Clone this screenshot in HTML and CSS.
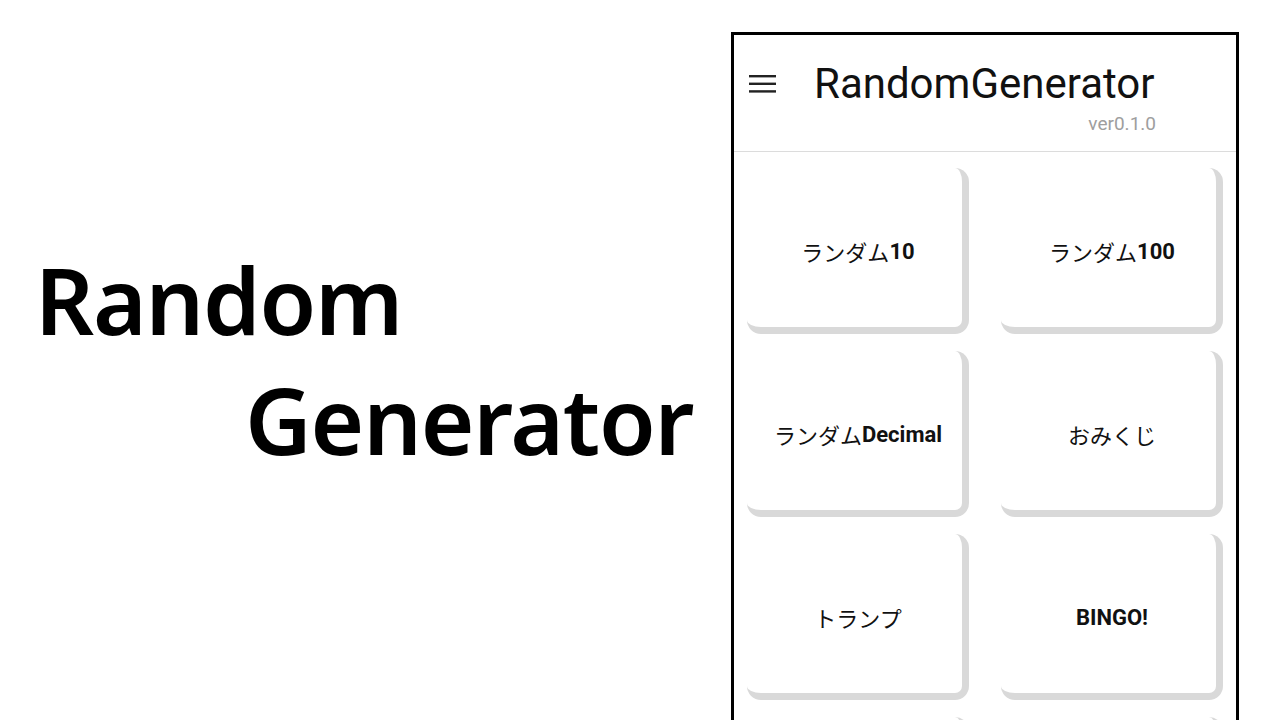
FILE: index.html
```html
<!DOCTYPE html>
<html lang="ja">
<head>
  <meta charset="UTF-8">
  <title>RandomGenerator</title>
  <link rel="stylesheet" href="styles.css">
</head>
<body>
  <div class="hero">
    <div class="hero-line">Random</div>
    <div class="hero-line indent">Generator</div>
  </div>

  <div class="phone">
    <div class="app-header">
      <div class="app-bar">
        <svg class="menu-icon" width="28" height="18" viewBox="0 0 28 18">
          <rect x="0" y="0" width="27" height="2.4" fill="#222"/>
          <rect x="0" y="7.6" width="27" height="2.4" fill="#222"/>
          <rect x="0" y="15.2" width="27" height="2.4" fill="#222"/>
        </svg>
        <div class="app-title">RandomGenerator</div>
      </div>
      <div class="app-version">ver0.1.0</div>
    </div>

    <div class="menu-grid">
      <div class="menu-card"><span class="ja">ランダム</span>10</div>
      <div class="menu-card"><span class="ja">ランダム</span>100</div>
      <div class="menu-card"><span class="ja">ランダム</span>Decimal</div>
      <div class="menu-card"><span class="ja">おみくじ</span></div>
      <div class="menu-card"><span class="ja">トランプ</span></div>
      <div class="menu-card">BINGO!</div>
      <div class="menu-card"></div>
      <div class="menu-card"></div>
    </div>
  </div>
</body>
</html>
```

FILE: styles.css
```css
html, body {
  margin: 0;
  height: 720px;
  overflow: hidden;
  background: #fff;
}
body {
  display: flex;
  font-family: Roboto, "Noto Sans CJK JP", sans-serif;
  color: #111;
}
.hero {
  width: 731px;
  padding-top: 240px;
  box-sizing: border-box;
}
.hero-line {
  font-family: "Noto Sans", sans-serif;
  font-weight: 600;
  font-size: 92px;
  line-height: 120px;
  letter-spacing: -1.2px;
  color: #000;
  padding-left: 35px;
}
.hero-line.indent {
  padding-left: 245px;
}
.phone {
  margin-top: 32px;
  width: 508px;
  height: 720px;
  border: 3px solid #000;
  box-sizing: border-box;
  overflow: hidden;
}
.app-header {
  height: 117px;
  border-bottom: 1px solid #dcdcdc;
  box-sizing: border-box;
}
.app-bar {
  display: flex;
  align-items: center;
  padding: 26px 0 0 15px;
}
.menu-icon {
  flex: none;
}
.app-title {
  margin-left: 37px;
  font-size: 42px;
  line-height: 46px;
  color: #111;
}
.app-version {
  width: 422px;
  text-align: right;
  margin-top: 5px;
  font-size: 19px;
  color: #9e9e9e;
}
.menu-grid {
  display: grid;
  grid-template-columns: 222px 222px;
  grid-auto-rows: 166px;
  column-gap: 32px;
  row-gap: 17px;
  padding: 16px 13px 0;
}
.menu-card {
  display: flex;
  align-items: center;
  justify-content: center;
  background: #fff;
  border-right: 7px solid #d9d9d9;
  border-bottom: 7px solid #d9d9d9;
  border-radius: 14px;
  padding: 7px 0 0 7px;
  font-size: 22px;
  font-weight: 700;
  color: #111;
}
.menu-card .ja {
  font-family: "Noto Sans CJK JP", sans-serif;
  font-weight: 400;
}
```
